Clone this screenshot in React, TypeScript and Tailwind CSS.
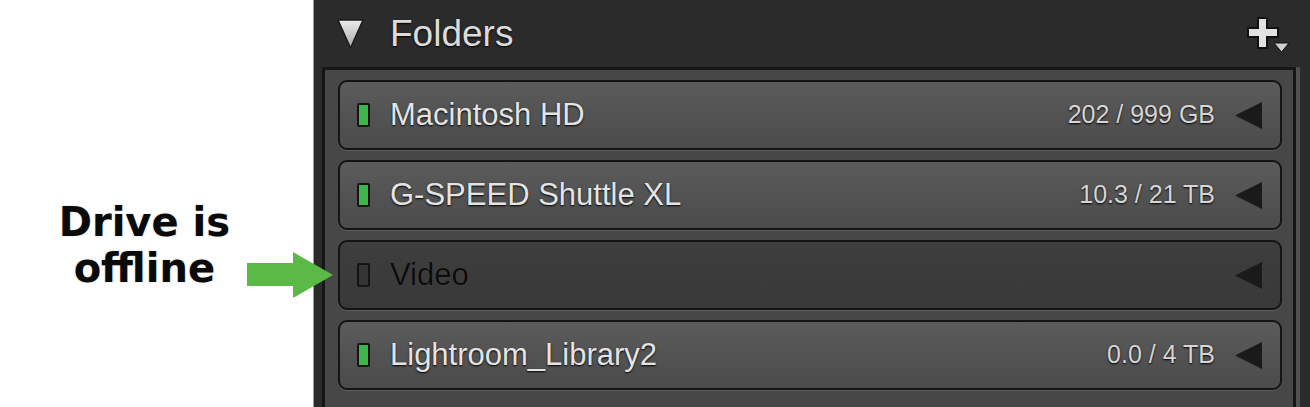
import React from 'react'

type Drive = { name: string; usage?: string; online: boolean }

const drives: Drive[] = [
  { name: 'Macintosh HD', usage: '202 / 999 GB', online: true },
  { name: 'G-SPEED Shuttle XL', usage: '10.3 / 21 TB', online: true },
  { name: 'Video', online: false },
  { name: 'Lightroom_Library2', usage: '0.0 / 4 TB', online: true },
]

function DriveRow({ drive }: { drive: Drive }) {
  const on = drive.online
  return (
    <div
      className={`flex h-[70px] items-center rounded-[9px] border-2 border-[#141414] pl-[17px] pr-[18px] shadow-[0_1px_0_#5e5e5e] ${
        on ? 'bg-linear-to-b from-[#5b5b5b] to-[#4b4b4b]' : 'bg-linear-to-b from-[#3e3e3e] to-[#383838]'
      }`}
    >
      <div
        className={`h-[24px] w-[13px] rounded-[2px] border-2 border-[#141414] ${on ? 'bg-[#3db64a]' : 'bg-[#353535]'}`}
      />
      <span
        className={`ml-[20px] font-['Liberation_Sans',sans-serif] text-[31px] ${
          on ? 'text-[#e4e4e4] [text-shadow:0_1px_2px_#000]' : 'text-[#0c0c0c] [text-shadow:0_0_1px_#5a5a5a]'
        }`}
      >
        {drive.name}
      </span>
      <span className="ml-auto mr-[20px] font-['Liberation_Sans',sans-serif] text-[25px] text-[#d6d6d6] [text-shadow:0_1px_2px_#000]">
        {drive.usage}
      </span>
      <svg width="27" height="27" viewBox="0 0 27 27">
        <polygon points="27,0 27,27 0,13.5" fill="#1a1a1a" />
      </svg>
    </div>
  )
}

export default function App() {
  return (
    <div className="flex h-[407px] w-[1310px] overflow-hidden bg-white">
      {/* annotation */}
      <div className="flex w-[313px] shrink-0 flex-col pt-[199px]">
        <div className="flex items-start justify-end">
          <div className="text-center font-['DejaVu_Sans',sans-serif] text-[40px] font-bold leading-[46px] text-[#0a0a0a] [text-shadow:0_0_2px_rgba(0,0,0,0.2)]">
            <div>Drive is</div>
            <div>offline</div>
          </div>
          <svg className="relative z-10 -mr-[20px] ml-[17px] mt-[53px]" width="86" height="46" viewBox="0 0 86 46">
            <polygon points="0,11 46,11 46,0 86,23 46,46 46,34 0,34" fill="#5bb946" />
          </svg>
        </div>
      </div>

      {/* folders panel */}
      <div className="flex flex-1 flex-col border-l border-[#9a9a9a] bg-[#2b2b2b]">
        <div className="flex h-[67px] shrink-0 items-center pl-[23px] pr-[19px]">
          <svg width="27" height="30" viewBox="0 0 27 30">
            <defs>
              <linearGradient id="tri" x1="0" y1="0" x2="0" y2="1">
                <stop offset="0" stopColor="#ececec" />
                <stop offset="1" stopColor="#a8a8a8" />
              </linearGradient>
            </defs>
            <polygon points="1,1 26,1 13.5,29" fill="url(#tri)" stroke="#1a1a1a" strokeWidth="1.5" />
          </svg>
          <span className="ml-[26px] font-['Liberation_Sans',sans-serif] text-[37px] text-[#dcdcdc] [text-shadow:0_1px_2px_#000]">
            Folders
          </span>
          <svg className="ml-auto mt-[4px]" width="44" height="37" viewBox="0 0 44 37">
            <polygon
              points="11,1 20,1 20,11 31,11 31,20 20,20 20,31 11,31 11,20 1,20 1,11 11,11"
              fill="#e2e2e2"
              stroke="#111"
              strokeWidth="2"
            />
            <polygon points="27,26 42,26 34.5,35" fill="#cfcfcf" stroke="#111" strokeWidth="1" />
          </svg>
        </div>

        <div className="flex flex-1">
          <div className="ml-[8px] flex flex-1 flex-col gap-[10px] border-l-[3px] border-t-[3px] border-[#161616] bg-[#474747] pl-[13px] pr-[11px] pt-[10px]">
            {drives.map((d) => (
              <DriveRow key={d.name} drive={d} />
            ))}
          </div>
          <div className="w-[3px] bg-[#161616]" />
          <div className="w-[4px] bg-[#505050]" />
          <div className="w-[10px]" />
        </div>
      </div>
    </div>
  )
}
